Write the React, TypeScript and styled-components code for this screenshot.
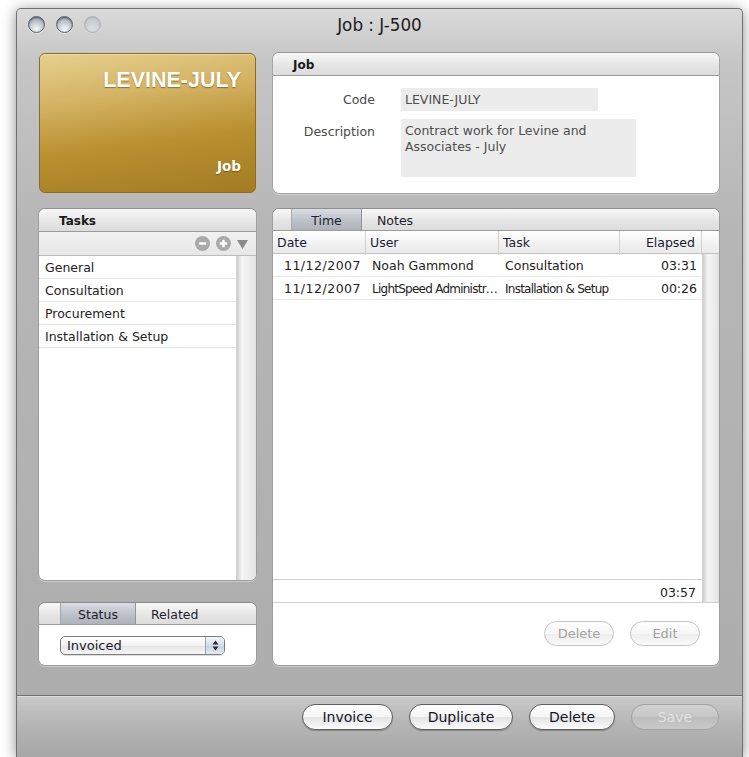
import React from "react";
import styled, { createGlobalStyle } from "styled-components";

interface Entry {
  date: string;
  user: string;
  task: string;
  elapsed: string;
  squeezeUser?: boolean;
  squeezeTask?: boolean;
}

const tasks = ["General", "Consultation", "Procurement", "Installation & Setup"];

const entries: Entry[] = [
  { date: "11/12/2007", user: "Noah Gammond", task: "Consultation", elapsed: "03:31" },
  {
    date: "11/12/2007",
    user: "LightSpeed Administr…",
    task: "Installation & Setup",
    elapsed: "00:26",
    squeezeUser: true,
    squeezeTask: true
  }
];

const GlobalStyle = createGlobalStyle`
  html, body {
    margin: 0;
    padding: 0;
    background: #ffffff;
  }
  body {
    font-family: "DejaVu Sans", "Noto Sans", sans-serif;
    font-size: 12.5px;
    color: #1a1a1a;
  }
`;

const Window = styled.div`
  margin: 8px 0 0 16px;
  width: 727px;
  height: 749px;
  box-sizing: border-box;
  border: 1px solid #707070;
  border-bottom: none;
  border-radius: 5px 5px 0 0;
  background: linear-gradient(#dadada 0px, #c6c6c6 50px, #b6b6b6 220px, #acacac 100%);
  box-shadow: 0 2px 14px rgba(0, 0, 0, 0.45);
  display: flex;
  flex-direction: column;
  overflow: hidden;
`;

const TitleBar = styled.div`
  height: 29px;
  display: grid;
  grid-template-columns: 1fr auto 1fr;
  align-items: center;
  padding: 0 11px;
`;

const Lights = styled.div`
  display: flex;
  gap: 11px;
  padding-top: 1px;
`;

const Light = styled.span<{ $dim?: boolean }>`
  width: 15px;
  height: 15px;
  border-radius: 50%;
  border: 1px solid #5b616d;
  background: radial-gradient(circle at 50% 80%, #f6f8fa 0%, #cdd2d9 40%, #858c99 100%);
  box-shadow: inset 0 1px 1px rgba(40, 45, 55, 0.6), 0 1px 0 rgba(255, 255, 255, 0.6);
  opacity: ${p => (p.$dim ? 0.3 : 1)};
`;

const Title = styled.div`
  font-size: 16.8px;
  color: #1c1c1c;
  padding-top: 2px;
`;

const Main = styled.div`
  display: grid;
  grid-template-columns: 217px 446px;
  grid-template-rows: 140px 456px;
  column-gap: 17px;
  row-gap: 16px;
  padding: 15px 23px 0 22px;
`;

const JobCard = styled.div`
  border-radius: 6px;
  border: 1px solid #8b6a22;
  background: linear-gradient(172deg, #e6d08e 0%, #d4b465 30%, #b9902f 62%, #a27b24 100%);
  box-shadow: inset 0 1px 0 rgba(255, 255, 255, 0.35);
  display: flex;
  flex-direction: column;
  justify-content: space-between;
  align-items: flex-end;
  padding: 14px 14px 18px;
`;

const CardTitle = styled.div`
  font-family: "Liberation Sans", Arial, sans-serif;
  font-weight: bold;
  font-size: 21.5px;
  color: #ffffff;
  text-shadow: 0 1px 1px rgba(90, 60, 10, 0.55);
`;

const CardKind = styled.div`
  font-weight: bold;
  font-size: 13.5px;
  color: #ffffff;
  text-shadow: 0 1px 1px rgba(90, 60, 10, 0.55);
`;

const Panel = styled.div`
  background: #ffffff;
  border-radius: 6px;
  box-shadow: 0 0 0 1px rgba(70, 70, 70, 0.35), 0 1px 0 1px rgba(255, 255, 255, 0.35);
  overflow: hidden;
  display: flex;
  flex-direction: column;
`;

const PanelHeader = styled.div`
  height: 22px;
  flex-shrink: 0;
  background: linear-gradient(#f8f8f8, #e6e6e6 55%, #dcdcdc);
  border-bottom: 1px solid #9c9c9c;
  font-weight: bold;
  font-size: 12px;
  line-height: 24px;
  padding-left: 20px;
`;

const Form = styled.div`
  display: grid;
  grid-template-columns: 102px auto;
  column-gap: 26px;
  row-gap: 7px;
  padding-top: 12px;
  justify-content: start;
  align-items: start;
`;

const Label = styled.div<{ $top?: boolean }>`
  text-align: right;
  color: #4a4a4a;
  line-height: ${p => (p.$top ? "16px" : "24px")};
  padding-top: ${p => (p.$top ? "5px" : "0")};
`;

const Field = styled.div<{ $width: number; $height: number }>`
  width: ${p => p.$width}px;
  height: ${p => p.$height}px;
  box-sizing: border-box;
  background: #ececec;
  color: #4e4e4e;
  padding: 4px 4px;
  line-height: 16px;
`;

const TasksColumn = styled.div`
  display: flex;
  flex-direction: column;
  gap: 23px;
`;

const TasksPanel = styled(Panel)`
  flex: 1;
`;

const ListTools = styled.div`
  height: 23px;
  flex-shrink: 0;
  background: linear-gradient(#f1f1f1, #e7e7e7);
  border-bottom: 1px solid #bcbcbc;
  display: flex;
  justify-content: flex-end;
  align-items: center;
  gap: 6px;
  padding-right: 8px;
`;

const ListBody = styled.div`
  flex: 1;
  display: grid;
  grid-template-columns: 1fr 20px;
`;

const ListRows = styled.div`
  display: flex;
  flex-direction: column;
`;

const ListRow = styled.div`
  height: 22px;
  line-height: 24px;
  border-bottom: 1px solid #e6e6e6;
  padding-left: 6px;
  color: #222;
`;

const ScrollTrack = styled.div`
  background: linear-gradient(to right, #cfcfcf 0px, #f6f6f6 5px, #eeeeee 60%, #e2e2e2 100%);
  border-left: 1px solid #d0d0d0;
`;

const StatusPanel = styled(Panel)`
  height: 62px;
  flex-shrink: 0;
`;

const TabBar = styled.div`
  height: 21px;
  flex-shrink: 0;
  display: flex;
  background: linear-gradient(#f8f8f8, #e6e6e6 55%, #dcdcdc);
  border-bottom: 1px solid #9c9c9c;
`;

const TabBlank = styled.div<{ $width: number }>`
  width: ${p => p.$width}px;
  border-right: 1px solid #a9a9a9;
`;

const Tab = styled.div<{ $active?: boolean; $width?: number }>`
  width: ${p => (p.$width ? `${p.$width}px` : "auto")};
  box-sizing: border-box;
  text-align: ${p => (p.$active ? "center" : "left")};
  padding-left: ${p => (p.$active ? "0" : "15px")};
  line-height: 23px;
  color: #1d1d2e;
  background: ${p => (p.$active ? "linear-gradient(#dadde2, #bcc1c8 55%, #aeb3bb)" : "transparent")};
  border-right: ${p => (p.$active ? "1px solid #8f949b" : "none")};
`;

const StatusBody = styled.div`
  padding: 11px 0 0 21px;
`;

const Select = styled.div`
  width: 165px;
  height: 19px;
  box-sizing: border-box;
  border: 1px solid #7d7d7d;
  border-radius: 5px;
  background: linear-gradient(#ffffff, #f1f1f1 50%, #e4e4e4 51%, #f6f6f6);
  box-shadow: 0 1px 1px rgba(0, 0, 0, 0.15);
  display: flex;
  overflow: hidden;
`;

const SelectText = styled.div`
  flex: 1;
  font-size: 13px;
  line-height: 18px;
  padding-left: 6px;
  color: #1a1a2a;
`;

const SelectStepper = styled.div`
  width: 18px;
  border-left: 1px solid #9aa4b2;
  background: linear-gradient(#f2f5fa, #d6deea 50%, #c6d1e2 51%, #e4eaf2);
  display: flex;
  align-items: center;
  justify-content: center;
`;

const TimePanel = styled(Panel)``;

const Table = styled.div`
  flex: 1;
  display: grid;
  grid-template-columns: 429px 1fr;
  grid-template-rows: 23px 1fr 24px;
`;

const HeaderRow = styled.div`
  grid-column: 1;
  grid-row: 1;
  display: grid;
  grid-template-columns: 93px 133px 121px 82px;
  background: linear-gradient(#ffffff, #f3f3f3 50%, #e9e9e9);
  border-bottom: 1px solid #c2c2c2;
`;

const HeaderCell = styled.div<{ $right?: boolean }>`
  border-right: 1px solid #d2d2d2;
  padding: 0 ${p => (p.$right ? "6px" : "4px")};
  text-align: ${p => (p.$right ? "right" : "left")};
  line-height: 24px;
  color: #1b1b35;
`;

const HeaderCorner = styled.div`
  grid-column: 2;
  grid-row: 1;
  background: linear-gradient(#ffffff, #f3f3f3 50%, #e9e9e9);
  border-bottom: 1px solid #c2c2c2;
`;

const Rows = styled.div`
  grid-column: 1;
  grid-row: 2;
  display: flex;
  flex-direction: column;
`;

const Row = styled.div`
  display: grid;
  grid-template-columns: 93px 133px 121px 82px;
  height: 22px;
  border-bottom: 1px solid #e8e8e8;
`;

const Cell = styled.div<{ $right?: boolean; $squeeze?: boolean; $wide?: boolean }>`
  white-space: nowrap;
  overflow: hidden;
  line-height: 24px;
  padding: 0 ${p => (p.$right ? "5px" : "6px")};
  text-align: ${p => (p.$right ? "right" : "left")};
  font-size: ${p => (p.$squeeze ? "12px" : "12.5px")};
  letter-spacing: ${p => (p.$squeeze ? "-0.75px" : p.$wide ? "0.5px" : "0")};
  color: #222;
`;

const TableTrack = styled(ScrollTrack)`
  grid-column: 2;
  grid-row: 2 / span 2;
  border-bottom: 1px solid #cfcfcf;
`;

const Footer = styled.div`
  grid-column: 1;
  grid-row: 3;
  border-top: 1px solid #cfcfcf;
  border-bottom: 1px solid #cfcfcf;
  text-align: right;
  line-height: 25px;
  padding-right: 6px;
  color: #222;
`;

const PanelActions = styled.div`
  height: 62px;
  flex-shrink: 0;
  display: flex;
  justify-content: flex-end;
  align-items: flex-start;
  gap: 16px;
  padding: 18px 19px 0 0;
  box-sizing: border-box;
`;

const SmallButton = styled.button`
  width: 70px;
  height: 25px;
  border-radius: 13px;
  border: 1px solid #c6c6c6;
  background: linear-gradient(#ffffff, #f7f7f7 50%, #ededed 51%, #fafafa);
  font-family: inherit;
  font-size: 13px;
  color: #a2a2a2;
  padding: 0;
`;

const Spacer = styled.div`
  flex: 1;
`;

const BottomBar = styled.div`
  height: 62px;
  box-sizing: border-box;
  border-top: 1px solid #707070;
  background: linear-gradient(#c9c9c9, #b4b4b4 50%, #a7a7a7);
  box-shadow: inset 0 1px 0 rgba(255, 255, 255, 0.35);
  display: flex;
  justify-content: flex-end;
  align-items: flex-start;
  gap: 16px;
  padding: 8px 23px 0 0;
`;

const BarButton = styled.button<{ $width: number; $disabled?: boolean }>`
  width: ${p => p.$width}px;
  height: 26px;
  border-radius: 13px;
  border: 1px solid ${p => (p.$disabled ? "#a2a2a2" : "#5f5f5f")};
  background: ${p =>
    p.$disabled
      ? "linear-gradient(#d2d2d2, #c6c6c6 50%, #bdbdbd 51%, #c8c8c8)"
      : "linear-gradient(#ffffff, #f4f4f4 50%, #e4e4e4 51%, #fbfbfb)"};
  box-shadow: ${p => (p.$disabled ? "none" : "0 1px 1px rgba(0, 0, 0, 0.25)")};
  font-family: inherit;
  font-size: 14px;
  color: ${p => (p.$disabled ? "#e2e2e2" : "#14142a")};
  padding: 0;
`;

const RoundIcon: React.FC<{ kind: "minus" | "plus" }> = ({ kind }) => (
  <svg width="15" height="15" viewBox="0 0 15 15">
    <circle cx="7.5" cy="7.5" r="7.5" fill="#a9a9a9" />
    <path d="M3.8 7.5h7.4" stroke="#fff" strokeWidth="2.4" />
    {kind === "plus" && <path d="M7.5 3.8v7.4" stroke="#fff" strokeWidth="2.4" />}
  </svg>
);

const MenuArrow = () => (
  <svg width="11" height="10" viewBox="0 0 11 10">
    <path d="M0 1h11L5.5 10z" fill="#8a8a8a" />
  </svg>
);

const StepperArrows = () => (
  <svg width="7" height="11" viewBox="0 0 7 11">
    <path d="M3.5 0.5L6.5 4.5H0.5z" fill="#2a2a2a" />
    <path d="M3.5 10.5L6.5 6.5H0.5z" fill="#2a2a2a" />
  </svg>
);

const App: React.FC = () => (
  <>
    <GlobalStyle />
    <Window>
      <TitleBar>
        <Lights>
          <Light />
          <Light />
          <Light $dim />
        </Lights>
        <Title>Job : J-500</Title>
        <div />
      </TitleBar>
      <Main>
        <JobCard>
          <CardTitle>LEVINE-JULY</CardTitle>
          <CardKind>Job</CardKind>
        </JobCard>

        <Panel>
          <PanelHeader>Job</PanelHeader>
          <Form>
            <Label>Code</Label>
            <Field $width={197} $height={23}>
              LEVINE-JULY
            </Field>
            <Label $top>Description</Label>
            <Field $width={235} $height={58}>
              Contract work for Levine and Associates - July
            </Field>
          </Form>
        </Panel>

        <TasksColumn>
          <TasksPanel>
            <PanelHeader>Tasks</PanelHeader>
            <ListTools>
              <RoundIcon kind="minus" />
              <RoundIcon kind="plus" />
              <MenuArrow />
            </ListTools>
            <ListBody>
              <ListRows>
                {tasks.map(t => (
                  <ListRow key={t}>{t}</ListRow>
                ))}
              </ListRows>
              <ScrollTrack />
            </ListBody>
          </TasksPanel>
          <StatusPanel>
            <TabBar>
              <TabBlank $width={21} />
              <Tab $active $width={75}>
                Status
              </Tab>
              <Tab>Related</Tab>
            </TabBar>
            <StatusBody>
              <Select>
                <SelectText>Invoiced</SelectText>
                <SelectStepper>
                  <StepperArrows />
                </SelectStepper>
              </Select>
            </StatusBody>
          </StatusPanel>
        </TasksColumn>

        <TimePanel>
          <TabBar>
            <TabBlank $width={18} />
            <Tab $active $width={70}>
              Time
            </Tab>
            <Tab>Notes</Tab>
          </TabBar>
          <Table>
            <HeaderRow>
              <HeaderCell>Date</HeaderCell>
              <HeaderCell>User</HeaderCell>
              <HeaderCell>Task</HeaderCell>
              <HeaderCell $right>Elapsed</HeaderCell>
            </HeaderRow>
            <HeaderCorner />
            <Rows>
              {entries.map(e => (
                <Row key={e.user}>
                  <Cell $right $wide>
                    {e.date}
                  </Cell>
                  <Cell $squeeze={e.squeezeUser}>{e.user}</Cell>
                  <Cell $squeeze={e.squeezeTask}>{e.task}</Cell>
                  <Cell $right>{e.elapsed}</Cell>
                </Row>
              ))}
            </Rows>
            <TableTrack />
            <Footer>03:57</Footer>
          </Table>
          <PanelActions>
            <SmallButton disabled>Delete</SmallButton>
            <SmallButton disabled>Edit</SmallButton>
          </PanelActions>
        </TimePanel>
      </Main>
      <Spacer />
      <BottomBar>
        <BarButton $width={91}>Invoice</BarButton>
        <BarButton $width={104}>Duplicate</BarButton>
        <BarButton $width={86}>Delete</BarButton>
        <BarButton $width={88} $disabled disabled>
          Save
        </BarButton>
      </BottomBar>
    </Window>
  </>
);

export default App;
